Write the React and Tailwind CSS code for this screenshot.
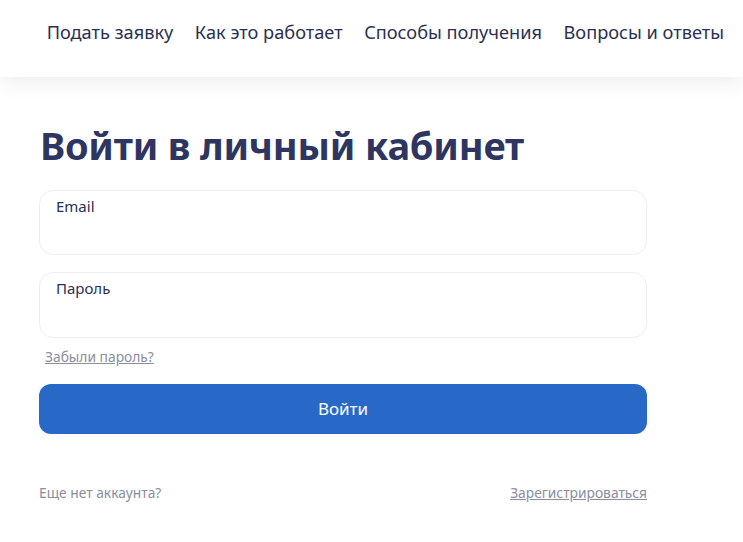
export default function App() {
  const font = { fontFamily: '"Noto Sans", Lato, sans-serif' };
  return (
    <div className="w-[743px] h-[542px] bg-white overflow-hidden text-[#2e3358]" style={font}>
      <header className="h-[77px] bg-white flex items-center justify-end pr-[19px] shadow-[0_4px_22px_rgba(0,0,0,0.08)] relative">
        <nav className="flex items-center gap-[21.5px] text-[18.2px] text-[#2b3050] -mt-[12px]">
          <span>Подать заявку</span>
          <span>Как это работает</span>
          <span>Способы получения</span>
          <span>Вопросы и ответы</span>
        </nav>
      </header>
      <main className="pl-[39px] pt-[42px] w-[647px]">
        <h1 className="text-[38px] font-bold leading-[52px] text-[#2e3560] ml-[1px] tracking-[-0.2px]">Войти в личный кабинет</h1>
        <div className="mt-[19px] flex flex-col">
          <div className="h-[65px] w-[608px] rounded-[14px] border border-[#eceef2] px-[16px] pt-[4px] text-[15px] text-[#2b3050]">Email</div>
          <div className="h-[66px] w-[608px] rounded-[14px] border border-[#eceef2] px-[16px] pt-[4px] text-[15px] text-[#2b3050] mt-[17px]">Пароль</div>
          <a className="mt-[9px] ml-[6px] text-[13.8px] text-[#8a8e9c] underline w-fit">Забыли пароль?</a>
          <button className="mt-[16px] h-[50px] w-[608px] rounded-[12px] bg-[#2869c8] text-white text-[17px]">Войти</button>
          <div className="mt-[49px] flex justify-between text-[13.8px] text-[#8a8e9c] w-[608px]">
            <span>Еще нет аккаунта?</span>
            <a className="underline">Зарегистрироваться</a>
          </div>
        </div>
      </main>
    </div>
  );
}
